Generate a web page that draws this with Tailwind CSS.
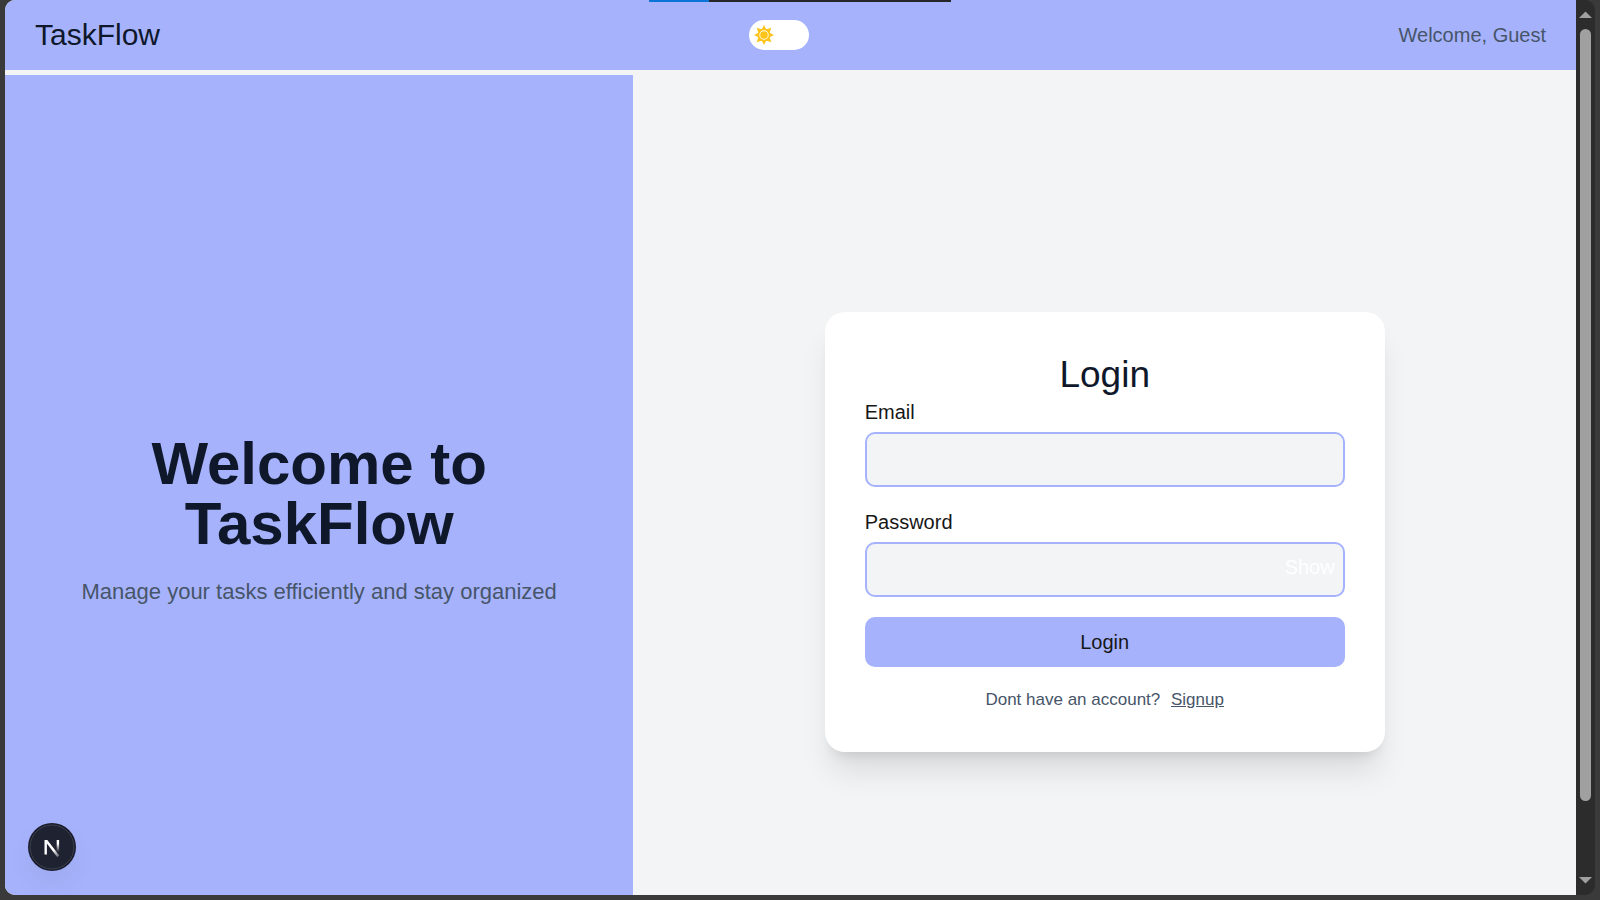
<!DOCTYPE html>
<html lang="en">
<head>
<meta charset="utf-8">
<title>TaskFlow</title>
<script src="https://cdn.jsdelivr.net/npm/@tailwindcss/browser@4"></script>
</head>
<body class="flex h-screen overflow-hidden bg-[#3a3a3a] pr-[5px] pb-[5px] pl-[5px] font-['Liberation_Sans',Arial,sans-serif] text-[20px] leading-[30px] text-[#171717]">
  <div class="relative flex min-w-0 flex-1 flex-col overflow-hidden rounded-l-[10px] bg-[#f3f4f6]">
    <header class="flex h-[70px] shrink-0 items-center justify-between bg-[#a6b3fc] px-[30px]">
      <span class="text-[30px] leading-[40px] text-[#0f172a]">TaskFlow</span>
      <button type="button" aria-label="Toggle theme" class="flex h-[30px] w-[60px] items-center rounded-full bg-white px-[5px]">
        <svg class="size-5" viewBox="0 0 24 24" fill="#fcc419" aria-hidden="true">
          <path d="M12 0l3 6h-6zM12 24l3-6h-6zM0 12l6-3v6zM24 12l-6-3v6zM3.200 3.200l6.400 2.200-4.200 4.200zM20.800 3.200l-2.200 6.400-4.200-4.200zM3.200 20.800l2.200-6.400 4.200 4.200zM20.800 20.800l-6.400-2.200 4.200-4.200z"/>
          <circle cx="12" cy="12" r="6.600" fill="#fff" stroke="#fcc419" stroke-width="2"/>
          <circle cx="12" cy="12" r="4.600"/>
        </svg>
      </button>
      <span class="text-[#475569]">Welcome, Guest</span>
    </header>
    <main class="mt-[5px] flex h-[calc(100vh+13px)] shrink-0">
      <section class="flex w-2/5 flex-col items-center justify-center gap-5 bg-[#a6b3fc] px-10 pb-5 text-center">
        <h1 class="text-[60px] leading-[60px] font-bold text-[#0f172a]">Welcome to TaskFlow</h1>
        <p class="text-[22px] leading-[35px] whitespace-nowrap text-[#475569]">Manage your tasks efficiently and stay organized</p>
      </section>
      <section class="flex flex-1 items-center justify-center">
        <form class="flex w-[560px] flex-col rounded-[20px] bg-white p-10 shadow-[0_25px_31px_-6px_rgba(0,0,0,0.1),0_10px_12px_-7px_rgba(0,0,0,0.1)]">
          <h2 class="text-center text-[37px] leading-[45px] text-[#0f172a]">Login</h2>
          <label for="email">Email</label>
          <input id="email" type="email" class="mt-[5px] h-[55px] rounded-[10px] border-2 border-[#a6b3fc] bg-[#f3f4f6] px-4">
          <label for="password" class="mt-5">Password</label>
          <div class="relative mt-[5px]">
            <input id="password" type="password" class="block h-[55px] w-full rounded-[10px] border-2 border-[#a6b3fc] bg-[#f3f4f6] px-4">
            <button type="button" class="absolute top-[10px] right-[10px] text-white">Show</button>
          </div>
          <button type="submit" class="mt-5 h-[50px] rounded-[10px] bg-[#a6b3fc] text-[#171717]">Login</button>
          <p class="mt-5 text-center text-[17px] leading-[25px] text-[#475569]">Dont have an account? <a href="#" class="ml-[6px] underline">Signup</a></p>
        </form>
      </section>
    </main>
    <button type="button" aria-label="Open Next.js dev tools" class="absolute bottom-[24px] left-[23px] size-[48px] rounded-full shadow-[0_12px_24px_rgba(0,0,0,0.05)]">
      <svg class="size-full" viewBox="0 0 48 48" aria-hidden="true">
        <defs>
          <linearGradient id="diag" x1="0" y1="0" x2="1" y2="1"><stop offset="0.600" stop-color="#fff"/><stop offset="1" stop-color="#fff" stop-opacity="0.200"/></linearGradient>
          <linearGradient id="stem" x1="0" y1="0" x2="0" y2="1"><stop offset="0.300" stop-color="#fff"/><stop offset="1" stop-color="#fff" stop-opacity="0"/></linearGradient>
        </defs>
        <circle cx="24" cy="24" r="24" fill="#191b29"/>
        <circle cx="24" cy="24" r="22" fill="#1f2230" stroke="#3e4152"/>
        <path d="M16.500 17H19.300L31.300 32.600L29.300 34.200L18.900 20.600V31.500H16.500z" fill="url(#diag)"/>
        <rect x="28.700" y="17" width="2.400" height="12" fill="url(#stem)"/>
      </svg>
    </button>
  </div>
  <div class="flex w-[19px] shrink-0 flex-col items-center rounded-r-[10px] bg-[#2c2c2c]" aria-hidden="true">
    <svg class="mt-[11px] h-[8px] w-[13px] shrink-0" viewBox="0 0 13 8" fill="#a0a0a0"><path d="M6.500 0.500L13 7H0z"/></svg>
    <div class="mt-[10px] mb-[75px] w-[11px] flex-1 rounded-full bg-[#a0a0a0]"></div>
    <svg class="mb-[11px] h-[8px] w-[13px] shrink-0" viewBox="0 0 13 8" fill="#a0a0a0"><path d="M6.500 7.500L0 1H13z"/></svg>
  </div>
  <div class="absolute top-0 left-[649px] flex h-[2px] w-[302px] bg-[#26262b]" aria-hidden="true"><div class="w-1/5 bg-[#0a74d8]"></div></div>
</body>
</html>
